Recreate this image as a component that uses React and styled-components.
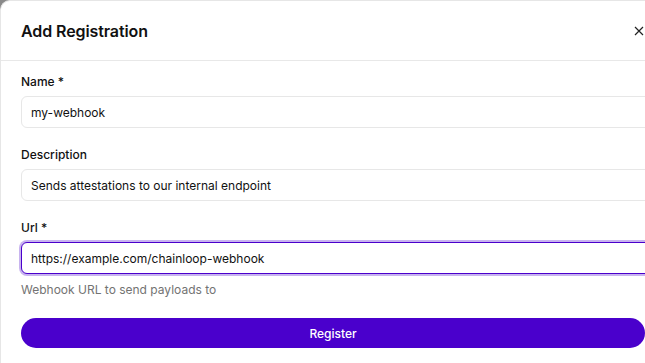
import styled, { createGlobalStyle } from "styled-components";

const GlobalStyle = createGlobalStyle`
  html, body {
    margin: 0;
    padding: 0;
    height: 100%;
    overflow: hidden;
    background: #8a8a8a;
  }
  body {
    font-family: "Inter", "Liberation Sans", sans-serif;
    color: #111;
  }
`;

const Dialog = styled.div`
  width: 665px;
  min-height: 100vh;
  background: #fff;
  border: 1px solid #e6e6e6;
  border-right: none;
  border-bottom: none;
  border-radius: 10px 0 0 0;
  box-sizing: border-box;
`;

const Header = styled.header`
  height: 60px;
  display: flex;
  align-items: center;
  justify-content: space-between;
  padding: 0 21px 0 20px;
  border-bottom: 1px solid #e8e8e8;
  box-sizing: border-box;
`;

const Title = styled.h2`
  margin: 0;
  font-size: 16px;
  font-weight: 600;
  letter-spacing: -0.1px;
  color: #111;
`;

const Close = styled.button`
  border: none;
  background: none;
  padding: 0;
  display: flex;
  color: #222;
  cursor: pointer;
`;

const Form = styled.form`
  padding: 11px 0 0 20px;
  display: flex;
  flex-direction: column;
`;

const Field = styled.div`
  display: flex;
  flex-direction: column;
  gap: 4px;
  margin-bottom: ${(p) => p.$space || "17px"};
`;

const Label = styled.label`
  font-size: 12px;
  font-weight: 500;
  line-height: 20px;
  color: #111;
`;

const Input = styled.input`
  width: 640px;
  height: 32px;
  box-sizing: border-box;
  border: 1px solid ${(p) => (p.$focused ? "#4a00cc" : "#e7e7e7")};
  box-shadow: ${(p) => (p.$focused ? "0 0 0 2px #c8b4ef" : "none")};
  border-radius: 6px;
  padding: 0 9px;
  font-family: "Inter", "Liberation Sans", sans-serif;
  font-size: 12px;
  color: #111;
  background: #fff;
  outline: none;
`;

const Help = styled.p`
  margin: 6px 0 0;
  font-size: 12px;
  line-height: 20px;
  color: #737373;
`;

const Submit = styled.button`
  margin-top: 18px;
  width: 624px;
  height: 30px;
  border: none;
  border-radius: 15px;
  background: #4a00cc;
  color: #fff;
  font-family: "Inter", "Liberation Sans", sans-serif;
  font-size: 12px;
  font-weight: 500;
  cursor: pointer;
`;

function CloseIcon() {
  return (
    <svg width="10" height="10" viewBox="0 0 10 10" fill="none" stroke="currentColor" strokeWidth="1.2">
      <path d="M1 1l8 8M9 1l-8 8" />
    </svg>
  );
}

export default function App() {
  return (
    <>
      <GlobalStyle />
      <Dialog>
        <Header>
          <Title>Add Registration</Title>
          <Close type="button" aria-label="Close">
            <CloseIcon />
          </Close>
        </Header>
        <Form onSubmit={(e) => e.preventDefault()}>
          <Field>
            <Label>Name *</Label>
            <Input defaultValue="my-webhook" />
          </Field>
          <Field>
            <Label>Description</Label>
            <Input defaultValue="Sends attestations to our internal endpoint" />
          </Field>
          <Field $space="0">
            <Label>Url *</Label>
            <Input $focused defaultValue="https://example.com/chainloop-webhook" />
          </Field>
          <Help>Webhook URL to send payloads to</Help>
          <Submit type="submit">Register</Submit>
        </Form>
      </Dialog>
    </>
  );
}
